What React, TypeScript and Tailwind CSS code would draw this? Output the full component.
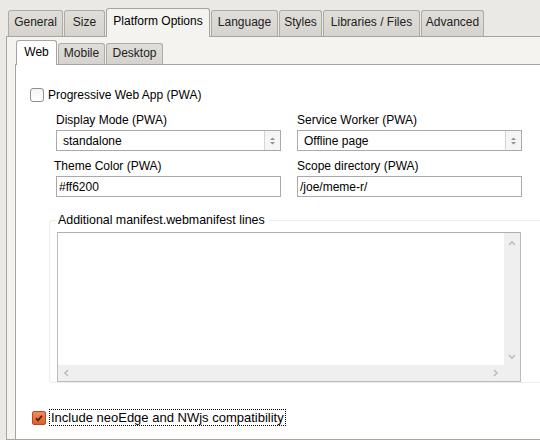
import React from "react";

type Tab = { label: string; width: string; active?: boolean };

const mainTabs: Tab[] = [
  { label: "General", width: "w-[55px]" },
  { label: "Size", width: "w-[41px]" },
  { label: "Platform Options", width: "w-[104px]", active: true },
  { label: "Language", width: "w-[67px]" },
  { label: "Styles", width: "w-[43px]" },
  { label: "Libraries / Files", width: "w-[97px]" },
  { label: "Advanced", width: "w-[63px]" },
];

const subTabs: Tab[] = [
  { label: "Web", width: "w-[41px]", active: true },
  { label: "Mobile", width: "w-[47px]" },
  { label: "Desktop", width: "w-[57px]" },
];

function MainTab({ label, width, active }: Tab) {
  if (active) {
    return (
      <div
        className={`${width} relative z-10 -mb-px flex h-[29px] shrink-0 justify-center rounded-t-[3px] border border-b-0 border-[#a8a59f] bg-[#f4f3f0] pt-[5px] text-black`}
      >
        {label}
      </div>
    );
  }
  return (
    <div
      className={`${width} flex h-[26px] shrink-0 justify-center rounded-t-[3px] border border-b-0 border-[#aeaba5] bg-gradient-to-b from-[#e0ded9] to-[#d6d3ce] pt-[4px] text-[#222]`}
    >
      {label}
    </div>
  );
}

function SubTab({ label, width, active }: Tab) {
  if (active) {
    return (
      <div
        className={`${width} relative z-10 -mb-px flex h-[25px] shrink-0 justify-center rounded-t-[3px] border border-b-0 border-[#a8a59f] bg-white pt-[4px] text-black`}
      >
        {label}
      </div>
    );
  }
  return (
    <div
      className={`${width} flex h-[21px] shrink-0 justify-center rounded-t-[3px] border border-b-0 border-[#aeaba5] bg-gradient-to-b from-[#e0ded9] to-[#d6d3ce] pt-[2px] text-[#222]`}
    >
      {label}
    </div>
  );
}

function SpinArrows() {
  return (
    <svg width="7" height="10" viewBox="0 0 7 10" className="block">
      <path d="M1 4 L3.5 1.5 L6 4 Z" fill="#8f8f8f" />
      <path d="M1 6 L3.5 8.5 L6 6 Z" fill="#8f8f8f" />
    </svg>
  );
}

function Select({ value }: { value: string }) {
  return (
    <div className="flex h-[21px] w-[225px] border border-[#a9a9a9] bg-white">
      <div className="flex flex-1 items-center pl-[6px] text-black">{value}</div>
      <div className="flex w-[16px] items-center justify-center border-l border-[#d4d4d4] bg-[#f5f5f5]">
        <SpinArrows />
      </div>
    </div>
  );
}

function TextInput({ value }: { value: string }) {
  return (
    <div className="flex h-[21px] w-[225px] items-center border border-[#a9a9a9] bg-white pl-[2px] text-black">
      {value}
    </div>
  );
}

function Chevron({ dir }: { dir: "up" | "down" | "left" | "right" }) {
  const paths: Record<string, string> = {
    up: "M1 5 L4 2 L7 5",
    down: "M1 2 L4 5 L7 2",
    left: "M5 1 L2 4 L5 7",
    right: "M2 1 L5 4 L2 7",
  };
  const size = dir === "up" || dir === "down" ? { w: 8, h: 7 } : { w: 7, h: 8 };
  return (
    <svg width={size.w} height={size.h} viewBox={`0 0 ${size.w} ${size.h}`} className="block">
      <path d={paths[dir]} fill="none" stroke="#bdbdbd" strokeWidth="1.6" />
    </svg>
  );
}

function ManifestArea() {
  return (
    <div className="flex h-[150px] w-[464px] flex-col border border-[#bdbdb8] border-t-[#b0b0aa] bg-white">
      <div className="flex flex-1">
        <div className="flex-1 bg-white" />
        <div className="flex w-[16px] flex-col items-center justify-between bg-[#efefef] pb-[5px] pt-[7px]">
          <Chevron dir="up" />
          <Chevron dir="down" />
        </div>
      </div>
      <div className="flex h-[16px]">
        <div className="flex flex-1 items-center justify-between bg-[#efefef] pl-[5px] pr-[5px]">
          <Chevron dir="left" />
          <Chevron dir="right" />
        </div>
        <div className="w-[16px] bg-[#efefef]" />
      </div>
    </div>
  );
}

function PlainCheckbox() {
  return (
    <div className="h-[14px] w-[14px] rounded-[3px] border border-[#8e8e8e] bg-gradient-to-b from-[#f4f4f4] to-white" />
  );
}

function CheckedBox() {
  return (
    <div className="flex h-[14px] w-[14px] items-center justify-center rounded-[2px] border border-[#b24e24] bg-gradient-to-b from-[#f08a5a] to-[#de5e2c]">
      <svg width="10" height="10" viewBox="0 0 10 10" className="block">
        <path d="M2 5.2 L4 7.4 L8 2.8" fill="none" stroke="#4a1c08" strokeWidth="1.7" />
      </svg>
    </div>
  );
}

export default function App() {
  return (
    <div className="flex h-[440px] w-[540px] flex-col overflow-hidden bg-[#ebe9e5] font-['Liberation_Sans',Arial,sans-serif] text-[12px] leading-[14px]">
      {/* main tab strip */}
      <div className="flex items-end gap-px pl-[8px] pt-[8px]">
        {mainTabs.map((t) => (
          <MainTab key={t.label} {...t} />
        ))}
      </div>

      {/* main tab page */}
      <div className="ml-[6px] flex w-[580px] flex-1 flex-col border border-[#a8a59f] bg-[#f4f3f0] pl-[8px]">
        <div className="flex items-end gap-px pl-px pt-[3px]">
          {subTabs.map((t) => (
            <SubTab key={t.label} {...t} />
          ))}
        </div>

        {/* Web page */}
        <div className="flex flex-1 flex-col border-l border-t border-[#a8a59f] bg-white pl-[14px]">
          <div className="mt-[23px] flex h-[14px] items-center">
            <PlainCheckbox />
            <span className="ml-[4px] text-black">Progressive Web App (PWA)</span>
          </div>

          <div className="ml-[26px] mt-[11px] grid w-[466px] grid-cols-[225px_225px] gap-x-[16px]">
            <div className="flex flex-col">
              <div className="text-black">Display Mode (PWA)</div>
              <div className="mt-[3px]">
                <Select value="standalone" />
              </div>
              <div className="-ml-[2px] mt-[8px] text-black">Theme Color (PWA)</div>
              <div className="mt-[3px]">
                <TextInput value="#ff6200" />
              </div>
            </div>
            <div className="flex flex-col">
              <div className="text-black">Service Worker (PWA)</div>
              <div className="mt-[3px]">
                <Select value="Offline page" />
              </div>
              <div className="mt-[8px] text-black">Scope directory (PWA)</div>
              <div className="mt-[3px]">
                <TextInput value="/joe/meme-r/" />
              </div>
            </div>
          </div>

          <fieldset className="ml-[19px] mt-[16px] w-[500px] rounded-[4px] border border-[#ececec] border-r-transparent pb-0 pl-[7px] pt-[5px]">
            <legend className="pl-px pr-[4px] text-[12.4px] text-black">Additional manifest.webmanifest lines</legend>
            <ManifestArea />
          </fieldset>

          <div className="ml-[2px] mt-[26px] flex h-[17px] items-center">
            <CheckedBox />
            <span className="ml-[3px] border border-dotted border-black px-px text-[13px] leading-[15px] text-black">
              Include neoEdge and NWjs compatibility
            </span>
          </div>
        </div>
      </div>
    </div>
  );
}
